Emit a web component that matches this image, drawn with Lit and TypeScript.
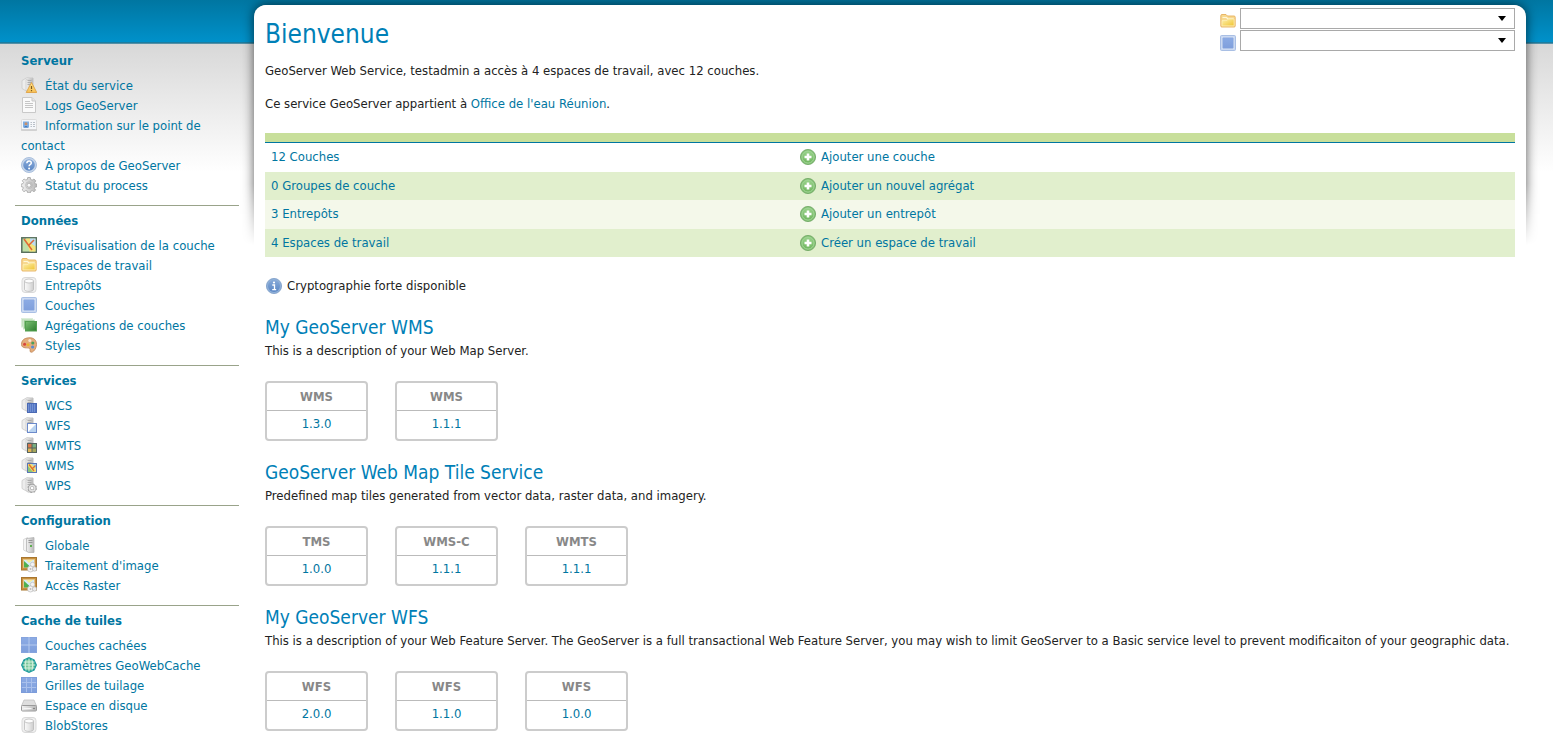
import { LitElement, html, css, svg } from "lit";
import type { TemplateResult } from "lit";
import { customElement } from "lit/decorators.js";

const serverBody = svg`
  <path d="M1 3.500 6 .6l6 .4V15H7l-6-3.500z" fill="#ededed" stroke="#cacaca" stroke-width=".8" stroke-linejoin="round"/>
  <path d="M5 2.500 12 1V15H7q-2-1-2-2.500z" fill="url(#steel)" stroke="#c2c2c2" stroke-width=".6"/>
  <path d="M6.500 3.500h4M6.500 5.500h4M6.500 7.500h4" stroke="#a2a2a2" stroke-width=".8"/>`;

const framedImage = svg`
  <rect x=".5" y=".5" width="15" height="12.500" fill="#c8913f" stroke="#a8762f"/>
  <rect x="2.500" y="2.500" width="11" height="8" fill="#d5ecfa" stroke="#e6c583" stroke-width=".8"/>
  <path d="M3 10.500V4l5 4.500v2z" fill="#4fb04f"/>
  <path d="m5 3 3 3 4-3z" fill="#f6ec9a"/>
  <circle cx="11.500" cy="7.500" r="2.200" fill="#f3f3f3" stroke="#b5b5b5" stroke-width=".6"/>
  <circle cx="9.500" cy="12" r="3" fill="#f4f4f4" stroke="#b0b0b0" stroke-width=".6"/>
  <circle cx="9.500" cy="12" r="1" fill="#bbb"/>
  <circle cx="13.600" cy="12" r="2.200" fill="#ececec" stroke="#adadad" stroke-width=".6"/>`;

const cylinder = svg`
  <rect x="1" y=".5" width="14" height="15" rx="3" fill="#f0f0f0" stroke="#d9d9d9"/>
  <path d="M3.500 4v8.500c0 2.500 9 2.500 9 0V4z" fill="url(#drum)" stroke="#b5b5b5" stroke-width=".7"/>
  <ellipse cx="8" cy="4" rx="4.500" ry="2" fill="#fdfdfd" stroke="#b5b5b5" stroke-width=".7"/>`;

const icons: Record<string, TemplateResult> = {
  status: svg`${serverBody}
    <path d="M10.500 5.500 15.800 15.500H5.200z" fill="url(#amber)" stroke="#e0a344" stroke-width=".9" stroke-linejoin="round"/>
    <path d="M10.500 9v3M10.500 13v1.300" stroke="#7d5a1c" stroke-width="1.200"/>`,
  page: svg`
    <path d="M1.500.5H11L14.500 4v11.500h-13z" fill="#fafafa" stroke="#c9c9c9"/>
    <path d="M11 .5V4h3.500" fill="#e6e6e6" stroke="#c9c9c9"/>
    <path d="M4 4.500h5M4 6.500h8M4 8.500h8M4 10.500h8" stroke="#c6c6c6"/>`,
  vcard: svg`
    <rect x=".5" y="2.500" width="15" height="10.500" rx="1" fill="#f5f7fa" stroke="#dcdcdc"/>
    <path d="M0 13h16" stroke="#bcbcbc"/>
    <rect x="2" y="4.500" width="6" height="6" fill="#7fb0e6"/>
    <circle cx="5" cy="6.800" r="1.500" fill="#c9906a"/><path d="M2.600 10.500q2.400-3 4.800 0z" fill="#3a70b3"/>
    <path d="M9.500 5.500H11M12 5.500h2M9.500 7.500H11M12 7.500h2M9.500 9.500H11M12 9.500h2" stroke="#b9c0c8"/>`,
  help: svg`
    <circle cx="8" cy="8" r="7.500" fill="#c7d6ea" stroke="#a9bfdd"/>
    <circle cx="8" cy="8" r="5.800" fill="url(#blueball)"/>
    <path d="M5.800 6.300q.2-2.300 2.300-2.300t2.200 2q0 1-1.200 1.700-1 .6-1 1.600" fill="none" stroke="#fff" stroke-width="1.500"/><circle cx="8.100" cy="11.500" r="1" fill="#fff"/>`,
  gear: svg`
    <path d="M6.700.5h2.600l.4 2 1.500.6L13 2l1.800 1.900-1.100 1.700.5 1.200 1.800.4v2.500l-2 .4-.5 1.300 1.100 1.800L13 14.700l-1.800-1.100-1.300.5-.5 1.700H6.700l-.5-1.800-1.400-.5L3 14.700 1.200 12.900l1.100-1.800-.5-1.200-1.600-.3V7.100l1.700-.4.6-1.300L1.300 3.800 3.100 2l1.700 1 1.500-.5z" fill="url(#steel)" stroke="#a3a3a3" stroke-width=".8"/>
    <circle cx="8" cy="8.200" r="3.400" fill="none" stroke="#b5b5b5" stroke-width=".7"/><circle cx="8" cy="8.200" r="2" fill="#fafafa" stroke="#9d9d9d" stroke-width=".7"/>`,
  preview: svg`
    <rect x=".8" y=".8" width="14.500" height="14.500" fill="#bfe0a8" stroke="#59705e" stroke-width="1.500"/>
    <path d="M9 1.500h5.500v8L9 6z" fill="#bcdcf3"/><path d="M5 1.500h4V6l5.500 3.500v5h-6z" fill="#f3e27a"/>
    <path d="M3 2 11 13M13 3 7.500 8.500" stroke="#e06a35" stroke-width="1.500"/>`,
  folder: svg`
    <path d="M.8 2.800q0-1.300 1.200-1.300h4l1.500 1.500H14q1.200 0 1.200 1.200V13q0 1-1 1H1.800q-1 0-1-1z" fill="#f7d990" stroke="#e6b05c" stroke-width=".9"/>
    <path d="M2.500 4.500h4L8 6h5.500" fill="none" stroke="#fff7da" stroke-width="1.200"/>
    <path d="M2 7.500h5L8.500 6H14v6.800H2z" fill="url(#gold)" stroke="#fff3c0" stroke-width=".6"/>`,
  drum: cylinder,
  layer: svg`
    <rect x=".5" y=".5" width="15" height="15" rx="1" fill="#c5d5f0" stroke="#a9bfe4"/>
    <rect x="1.800" y="1.800" width="12.400" height="12.400" fill="#e8effa"/><rect x="2.800" y="2.800" width="10.400" height="10.400" fill="url(#sky)" stroke="#87a6dc" stroke-width=".6"/>`,
  group: svg`
    <rect x=".5" y="1.500" width="11" height="8.500" fill="#c3e2bf" stroke="#dceeda"/>
    <rect x="2.500" y="3" width="11" height="9" fill="#8cc686" stroke="#cde5c9"/>
    <rect x="4.500" y="4.500" width="11" height="9.500" fill="url(#leaf)" stroke="#55a052"/>`,
  palette: svg`
    <path d="M7.500.8C12.500.3 15.600 3 15.500 7.500S12 15.600 10 15.200s0-3-1.500-3.900S.5 12 .5 7.500 3.500 1.200 7.500.8z" fill="#e3ad7c" stroke="#bf8353" stroke-width=".8"/>
    <circle cx="3.600" cy="7.300" r="1.500" fill="#d9453c"/><circle cx="7" cy="7.700" r="1.500" fill="#e9b52f"/>
    <circle cx="8.800" cy="3.600" r="1.500" fill="#f5e6d4"/><circle cx="11.800" cy="6" r="1.600" fill="#4c9f5a"/><circle cx="11.600" cy="10" r="1.600" fill="#5a8bd0"/>`,
  wcs: svg`${serverBody}
    <rect x="6.500" y="6.500" width="9" height="9" fill="#5577c4" stroke="#4a69b3"/>
    <path d="M7 8h8M7 10h8M7 12h8M7 14h8" stroke="#93ade0" stroke-width="1" stroke-dasharray="1 1"/>`,
  wfs: svg`${serverBody}
    <rect x="6.500" y="6.500" width="9" height="9" fill="#fff" stroke="#6c8aca"/><path d="M7 15 15 7v8z" fill="#b9d3f0"/>`,
  wmts: svg`${serverBody}
    <rect x="6.500" y="6.500" width="9" height="9" fill="#e0b558" stroke="#56635f"/>
    <path d="M7 7h4v4H7z" fill="#d9784a"/><path d="M11 11h4v4h-4z" fill="#a5a85c"/><path d="M11 7h4v4h-4z" fill="#79ad80"/>
    <path d="M11 7v8M7 11h8" stroke="#56635f"/>`,
  wms: svg`${serverBody}
    <rect x="6.500" y="6.500" width="9" height="9" fill="#f1df76" stroke="#5b77b5"/>
    <path d="M11 7h4v5z" fill="#9fcdec"/><path d="M7 9v6h5z" fill="#8fc678"/><path d="M8 7.500 13 14M14.500 8.500l-3 3" stroke="#e0702e" stroke-width="1.300"/>`,
  wps: svg`${serverBody}
    <circle cx="11.200" cy="11.200" r="4" fill="none" stroke="#a9a9a9" stroke-width="1.600" stroke-dasharray="1.800 1.340"/>
    <circle cx="11.200" cy="11.200" r="2.700" fill="#fff" stroke="#9c9c9c" stroke-width="2.600"/>
    <circle cx="11.200" cy="11.200" r="2.700" fill="none" stroke="#e2e2e2" stroke-width="1.600"/>`,
  server: svg`
    <path d="M2.500 2.500 6.500.6V15L2.500 13z" fill="#f4f4f4" stroke="#d2d2d2" stroke-width=".8"/>
    <path d="M5.500 1.500 13 .6v14.800H7.500l-2-1.400z" fill="url(#steel)" stroke="#b3b3b3" stroke-width=".8"/>
    <path d="M7.500 3.500h4M7.500 5.500h4" stroke="#969696"/><rect x="9" y="8" width="2" height="2" fill="#5fae50"/>`,
  frame: framedImage,
  tiles4: svg`
    <rect width="16" height="16" fill="#86a4de"/><path d="M1 1h6.500v6.500H1zM8.500 1H15v6.500H8.500zM1 8.500h6.500V15H1zM8.500 8.500H15V15H8.500z" fill="url(#sky)"/>
    <path d="M8 0v16M0 8h16" stroke="#b5caef"/>`,
  globe: svg`
    <path d="M8 0 13.500 2.500 16 8l-2.500 5.500L8 16l-5.500-2.500L0 8l2.500-5.500z" fill="#1c9c9b"/>
    <circle cx="8" cy="8" r="5.600" fill="#79c79b"/>
    <path d="M8 1.500v13M1.500 8h13M5 2.500Q3.500 8 5 13.500M11 2.500q1.500 5.500 0 11M2.500 5h11M2.500 11h11" fill="none" stroke="#d9f3e2" stroke-width=".9"/>`,
  tiles9: svg`
    <rect width="16" height="16" fill="url(#sky)"/><path d="M5.500 0v16M10.500 0v16M0 5.500h16M0 10.500h16" stroke="#a9c0ec"/>
    <rect x=".5" y=".5" width="15" height="15" fill="none" stroke="#7c9cda" stroke-width=".8"/>`,
  disk: svg`
    <path d="M3 3h10l2.500 6H.5z" fill="#dedede" stroke="#c2c2c2" stroke-width=".8"/>
    <rect x=".5" y="8.500" width="15" height="5.500" rx="1" fill="url(#steel)" stroke="#9a9a9a"/>
    <path d="M2.500 11.500h8" stroke="#f6f6f6"/><circle cx="13" cy="11.500" r=".8" fill="#6f6f6f"/>`,
  add: svg`
    <circle cx="8" cy="8" r="7.600" fill="#84c175" stroke="#6ba560" stroke-width=".8"/>
    <circle cx="8" cy="8" r="6" fill="url(#lime)" stroke="#a5d79a" stroke-width=".8"/>
    <path d="M8 4.500v7M4.500 8h7" stroke="#fff" stroke-width="2.600"/>`,
  info: svg`
    <circle cx="8" cy="8" r="7.600" fill="#8fb0d8" stroke="#7b9cc6" stroke-width=".8"/>
    <circle cx="8" cy="8" r="6" fill="url(#blueball)"/>
    <path d="M6.300 7h2.200v4.500M6.200 11.700h4" fill="none" stroke="#fff" stroke-width="1.300"/><circle cx="8" cy="4.500" r="1.100" fill="#fff"/>`,
};

const gradients = svg`<defs>
  <linearGradient id="steel"><stop offset="0" stop-color="#f2f2f2"/><stop offset="1" stop-color="#b8b8b8"/></linearGradient>
  <linearGradient id="drum"><stop offset="0" stop-color="#fafafa"/><stop offset=".5" stop-color="#e8e8e8"/><stop offset="1" stop-color="#cdcdcd"/></linearGradient>
  <linearGradient id="amber" x2="0" y2="1"><stop offset="0" stop-color="#ffe38a"/><stop offset="1" stop-color="#f7bf55"/></linearGradient>
  <linearGradient id="gold" x2="1" y2="1"><stop offset="0" stop-color="#fdf0b0"/><stop offset="1" stop-color="#f0c431"/></linearGradient>
  <linearGradient id="sky" x2="0" y2="1"><stop offset="0" stop-color="#8cabe4"/><stop offset="1" stop-color="#7f9fdc"/></linearGradient>
  <linearGradient id="leaf" x2="1" y2="1"><stop offset="0" stop-color="#7cc074"/><stop offset="1" stop-color="#2c7d2e"/></linearGradient>
  <linearGradient id="lime" x2="0" y2="1"><stop offset="0" stop-color="#9ad38c"/><stop offset="1" stop-color="#70b55f"/></linearGradient>
  <linearGradient id="blueball" x2="0" y2="1"><stop offset="0" stop-color="#86a9d8"/><stop offset="1" stop-color="#5b87c5"/></linearGradient>
</defs>`;

const icon = (name: string) =>
  html`<svg class="icon" viewBox="0 0 16 16" aria-hidden="true">${gradients}${icons[name]}</svg>`;

const menu: { title: string; items: [string, string][] }[] = [
  { title: "Serveur", items: [["status", "État du service"], ["page", "Logs GeoServer"], ["vcard", "Information sur le point de contact"], ["help", "À propos de GeoServer"], ["gear", "Statut du process"]] },
  { title: "Données", items: [["preview", "Prévisualisation de la couche"], ["folder", "Espaces de travail"], ["drum", "Entrepôts"], ["layer", "Couches"], ["group", "Agrégations de couches"], ["palette", "Styles"]] },
  { title: "Services", items: [["wcs", "WCS"], ["wfs", "WFS"], ["wmts", "WMTS"], ["wms", "WMS"], ["wps", "WPS"]] },
  { title: "Configuration", items: [["server", "Globale"], ["frame", "Traitement d'image"], ["frame", "Accès Raster"]] },
  { title: "Cache de tuiles", items: [["tiles4", "Couches cachées"], ["globe", "Paramètres GeoWebCache"], ["tiles9", "Grilles de tuilage"], ["disk", "Espace en disque"], ["drum", "BlobStores"]] },
];

const catalog = [
  ["12 Couches", "Ajouter une couche"],
  ["0 Groupes de couche", "Ajouter un nouvel agrégat"],
  ["3 Entrepôts", "Ajouter un entrepôt"],
  ["4 Espaces de travail", "Créer un espace de travail"],
];

const services: { title: string; text: string; versions: [string, string][] }[] = [
  { title: "My GeoServer WMS", text: "This is a description of your Web Map Server.", versions: [["WMS", "1.3.0"], ["WMS", "1.1.1"]] },
  { title: "GeoServer Web Map Tile Service", text: "Predefined map tiles generated from vector data, raster data, and imagery.", versions: [["TMS", "1.0.0"], ["WMS-C", "1.1.1"], ["WMTS", "1.1.1"]] },
  { title: "My GeoServer WFS", text: "This is a description of your Web Feature Server. The GeoServer is a full transactional Web Feature Server, you may wish to limit GeoServer to a Basic service level to prevent modificaiton of your geographic data.", versions: [["WFS", "2.0.0"], ["WFS", "1.1.0"], ["WFS", "1.0.0"]] },
];

@customElement("app-root")
export class AppRoot extends LitElement {
  static styles = css`
    :host {
      display: block;
      min-height: 100vh;
      font: 13px/20px "DejaVu Sans Condensed", "DejaVu Sans", sans-serif;
      color: #222;
      background:
        linear-gradient(#0076a1, #0091ca) 0 0 / 100% 42px no-repeat,
        linear-gradient(#00729b, #6f9aab) 0 42px / 100% 2px no-repeat,
        linear-gradient(#d8d8d8, #fff) 0 44px / 100% 128px no-repeat,
        #fff;
    }
    * { box-sizing: border-box; }
    a { color: #0076a1; text-decoration: none; }
    h1, h2, h3, p, ul { margin: 0; padding: 0; }
    ul { list-style: none; }
    .icon { width: 16px; height: 16px; flex: none; }
    .page { display: grid; grid-template-columns: 254px minmax(0, 1fr); padding-right: 27px; }
    .side { padding: 51px 15px 0; }
    .group { padding: 0 6px 9px; }
    .group + .group { border-top: 1px solid #99a38a; padding-top: 5px; }
    .group h3 { font-size: 13px; line-height: 20px; color: #0076a1; margin-bottom: 5px; }
    .group .icon { vertical-align: -3px; margin-right: 8px; }
    .panel { position: relative; margin-top: 5px; border-radius: 12px; background: #fff; padding: 0 11px; }
    .shade {
      position: absolute;
      z-index: 0;
      inset: -5px -20px auto;
      height: 245px;
      padding: 5px 20px 0;
      overflow: hidden;
      pointer-events: none;
      mask-image: linear-gradient(#000 75%, transparent);
    }
    .shade::before { content: ""; display: block; height: 300px; border-radius: 12px; box-shadow: 0 0 12px rgba(0, 0, 0, 0.65); background: #fff; }
    .content { position: relative; padding-bottom: 20px; }
    .top { display: flex; justify-content: space-between; height: 46px; }
    h1 { font-size: 26px; line-height: 32px; padding-top: 13px; font-weight: 400; color: #0080b7; }
    .pickers { display: grid; gap: 1px; padding-top: 3px; align-content: start; }
    .picker { display: flex; align-items: end; gap: 4px; }
    select {
      appearance: none;
      width: 275px;
      height: 21px;
      border: 1px solid #a9a9a9;
      border-radius: 0;
      background: #fff url("data:image/svg+xml,%3Csvg xmlns='http://www.w3.org/2000/svg' width='8' height='5'%3E%3Cpath d='M0 0h8L4 5z'/%3E%3C/svg%3E") right 8px center no-repeat;
    }
    .intro { padding-top: 10px; display: grid; gap: 13px; }
    table { width: 100%; border-spacing: 0; margin: 19px 0; }
    th { height: 10px; padding: 0; background: #c8df9b; border-bottom: 1px solid #0076a1; }
    td { height: 28px; padding: 0 5px 1px; }
    td:first-child { width: 42.4%; padding-left: 6px; }
    tr:nth-child(odd) td { height: 29px; }
    tbody tr:nth-child(even) { background: #e1efcd; }
    tbody tr:nth-child(3) { background: #f4f8ea; }
    .line { display: flex; align-items: center; gap: 5px; }
    .note { padding-left: 1px; }
    .service { padding-top: 19px; }
    .service h2 { font-size: 19px; line-height: 24px; font-weight: 400; color: #0080b7; margin-bottom: 2px; }
    .service p { margin-bottom: 20px; }
    .cards { display: flex; gap: 27px; }
    .card { width: 103px; height: 60px; border: 2px solid #ccc; border-radius: 4px; text-align: center; }
    .card h3 { font-size: 13px; line-height: 26px; padding-top: 1px; color: #888; border-bottom: 1px solid #bbb; }
    .card a { display: block; line-height: 26px; }
  `;

  render() {
    return html`
      <div class="page">
        <nav class="side">
          ${menu.map(g => html`<section class="group">
            <h3>${g.title}</h3>
            <ul>${g.items.map(([i, t]) => html`<li><a href="#">${icon(i)}${t}</a></li>`)}</ul>
          </section>`)}
        </nav>
        <main class="panel">
          <div class="shade"></div>
          <div class="content">
            <div class="top">
              <h1>Bienvenue</h1>
              <div class="pickers">
                <label class="picker">${icon("folder")}<select aria-label="Espace de travail"><option></option></select></label>
                <label class="picker">${icon("layer")}<select aria-label="Couche"><option></option></select></label>
              </div>
            </div>
            <div class="intro">
              <p>GeoServer Web Service, testadmin a accès à 4 espaces de travail, avec 12 couches.</p>
              <p>Ce service GeoServer appartient à <a href="#">Office de l'eau Réunion</a>.</p>
            </div>
            <table>
              <thead><tr><th></th><th></th></tr></thead>
              <tbody>${catalog.map(([a, b]) => html`<tr><td><a href="#">${a}</a></td><td><a class="line" href="#">${icon("add")}${b}</a></td></tr>`)}</tbody>
            </table>
            <p class="line note">${icon("info")}Cryptographie forte disponible</p>
            ${services.map(s => html`<section class="service">
              <h2>${s.title}</h2>
              <p>${s.text}</p>
              <div class="cards">${s.versions.map(([n, v]) => html`<div class="card"><h3>${n}</h3><a href="#">${v}</a></div>`)}</div>
            </section>`)}
          </div>
        </main>
      </div>`;
  }
}
